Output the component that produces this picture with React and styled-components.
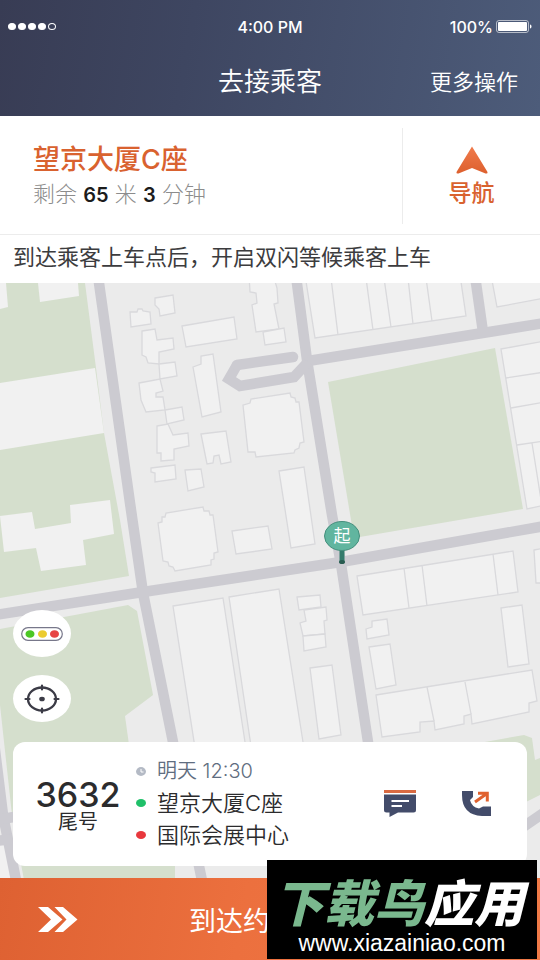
import React from "react";
import styled, { createGlobalStyle } from "styled-components";

const GlobalStyle = createGlobalStyle`
  * {
    box-sizing: border-box;
  }

  body {
    margin: 0;
    font-family: Inter, "Noto Sans CJK SC", sans-serif;
    color: #2b2b2d;
  }

  svg {
    display: block;
  }
`;

const Page = styled.div`
  display: flex;
  flex-direction: column;
  min-height: 100vh;
`;

const BareButton = styled.button`
  border: none;
  padding: 0;
  background: none;
  font-family: inherit;
  color: inherit;
  cursor: pointer;
`;

const Header = styled.header`
  background: linear-gradient(100deg, #383c54 0%, #3e4661 35%, #4d5c7a 100%);
  color: #fff;
  padding-bottom: 5px;
`;

const ThreeColumns = styled.div`
  display: grid;
  grid-template-columns: 1fr auto 1fr;
  align-items: center;
`;

const StatusBar = styled(ThreeColumns)`
  height: 53px;
  padding: 0 8px;
  font-size: 16px;
  font-weight: 500;
`;

const Signal = styled.div`
  display: flex;
  gap: 2px;
`;

const SignalDot = styled.span`
  width: 8px;
  height: 7px;
  border-radius: 50%;
  border: 1px solid #fff;
  background: ${(props) => (props.$on ? "#fff" : "transparent")};
`;

const Battery = styled.div`
  display: flex;
  align-items: center;
  justify-content: flex-end;
  gap: 3px;
`;

const NavBar = styled(ThreeColumns)`
  height: 58px;
  padding: 0 22px;
`;

const Title = styled.h1`
  grid-column: 2;
  margin: 0;
  font-size: 26px;
  font-weight: 350;
  line-height: 32px;
`;

const MoreButton = styled(BareButton)`
  justify-self: end;
  font-size: 22px;
  font-weight: 350;
  line-height: 32px;
`;

const Trip = styled.section`
  display: flex;
  padding: 12px 0 10px;
  background: #fff;
  border-bottom: 1px solid #ececec;
`;

const TripInfo = styled.div`
  flex: 1;
  padding: 14px 0 0 33px;
`;

const Place = styled.h2`
  margin: 0;
  font-size: 27px;
  font-weight: 500;
  line-height: 36px;
  color: #d9622f;
`;

const Remaining = styled.p`
  margin: 0;
  font-size: 22px;
  font-weight: 300;
  line-height: 32px;
  color: #8c8c8c;

  strong {
    font-size: 20px;
    font-weight: 600;
    color: #1c1c1c;
  }
`;

const NavigateButton = styled(BareButton)`
  display: flex;
  flex-direction: column;
  align-items: center;
  gap: 2px;
  width: 138px;
  height: 96px;
  padding-top: 18px;
  border-left: 1px solid #ececec;
  font-size: 23px;
  font-weight: 500;
  line-height: 34px;
  color: #d9622f;
`;

const Tip = styled.p`
  margin: 0;
  padding: 6px 13px 10px;
  background: #fff;
  font-size: 22px;
  line-height: 32px;
  white-space: nowrap;
  color: #3c3c3e;
`;

const MapArea = styled.main`
  position: relative;
  display: flex;
  flex: 1;
  flex-direction: column;
  justify-content: flex-end;
  gap: 18px;
  min-height: 420px;
  padding: 0 13px 12px;
  background: #ebebeb;
`;

const MapCanvas = styled.svg`
  position: absolute;
  inset: 0;
  width: 100%;
  height: 100%;
`;

const MapButton = styled(BareButton)`
  position: relative;
  display: flex;
  align-items: center;
  justify-content: center;
  width: 58px;
  height: 47px;
  border-radius: 50%;
  background: #fff;
`;

const OrderCard = styled.section`
  position: relative;
  display: flex;
  align-items: center;
  margin-top: 2px;
  padding: 13px 36px 15px 7px;
  border-radius: 12px;
  background: #fff;
`;

const Tail = styled.div`
  width: 116px;
  padding-top: 10px;
  text-align: center;
`;

const TailNumber = styled.div`
  font-size: 34px;
  font-weight: 500;
  line-height: 28px;
`;

const TailLabel = styled.div`
  font-size: 20px;
  line-height: 26px;
`;

const Stops = styled.ul`
  flex: 1;
  margin: 0;
  padding: 0;
  list-style: none;
`;

const Stop = styled.li`
  display: flex;
  align-items: center;
  gap: 11px;
  font-size: 22px;
  font-weight: 350;
  line-height: 32px;
  color: ${(props) => (props.$muted ? "#5f6d80" : "#2b2b2d")};
`;

const StopTime = styled.time`
  font-size: 20px;
  white-space: nowrap;
`;

const StopDot = styled.span`
  width: 10px;
  height: 8px;
  border-radius: 50%;
  background: ${(props) => props.$color};
`;

const Contacts = styled.div`
  display: flex;
  align-items: center;
  gap: 46px;
`;

const ArriveButton = styled(BareButton)`
  display: grid;
  grid-template-columns: 1fr auto 1fr;
  align-items: center;
  width: 100%;
  height: 82px;
  padding: 0 38px;
  background: linear-gradient(100deg, #de6132, #ec703e 45%, #f07a48);
  font-size: 27px;
  color: #fff;
`;

const Watermark = styled.a`
  position: absolute;
  right: 3px;
  bottom: 1px;
  width: 270px;
  height: 99px;
  padding-top: 10px;
  background: #000;
  color: #fff;
  text-align: center;
  text-decoration: none;
  white-space: nowrap;
`;

const WatermarkName = styled.div`
  padding-right: 6px;
  font-family: "Noto Sans CJK SC", sans-serif;
  font-size: 50px;
  font-style: italic;
  font-weight: 900;
  line-height: 60px;

  span {
    color: #7ab88e;
  }
`;

const WatermarkUrl = styled.div`
  font-family: "Liberation Sans", sans-serif;
  font-size: 23px;
  line-height: 26px;
`;

const Root = styled.div`
  position: relative;
`;

const parks = [
  "0,283 85,283 96,368 104,433 120,520 129,576 0,598",
  "328,382 495,348 523,509 354,538",
  "0,629 128,605 137,611 153,695 125,716 130,752 175,860 175,880 24,880 12,815 0,705",
  "440,750 524,735 532,738 535,760 540,758 540,795 500,815",
];

const roads = [
  "98,276 131,510 143,593 173,742 204,890",
  "-5,615 143,592 341,562 545,526",
  "296,276 307,360 332,515 341,564 368,742 388,890",
  "308,361 545,323",
  "475,276 483,332",
  "237,365 229,379 240,386 294,377 308,362",
  "-6,742 3,815 17,885",
  "-5,820 14,817",
  "-5,841 12,839",
  "510,836 545,812",
];

// lawns' own buildings, drawn without an outline
const plainBuildings = [
  "0,283 6,283 8,307 0,309",
  "38,283 78,283 79,296 40,302",
  "0,383 95,368 104,433 0,450",
  "0,516 32,512 35,529 71,523 70,505 110,500 114,534 83,540 86,565 41,571 36,548 4,552",
  "-5,846 8,844 13,880 -5,880",
];

const buildings = [
  "155,298 173,295 175,313 160,316 159,309 155,305",
  "130,312 137,312 138,309 142,309 143,311 150,312 151,324 131,327",
  "142,331 155,329 157,340 173,338 174,349 159,352 159,364 148,363 146,357 142,355 142,343",
  "159,364 175,362 177,376 160,379",
  "139,383 160,379 163,391 156,393 156,397 163,397 165,410 146,412 141,400",
  "165,410 182,407 184,420 167,424",
  "157,426 168,424 173,435 188,433 189,446 174,449 174,460 161,461 161,453 157,453",
  "151,468 175,465 176,479 155,482 155,473 151,472",
  "182,326 234,317 237,339 186,347",
  "193,367 201,364 201,356 213,354 221,412 202,417",
  "201,434 226,431 231,462 221,464 219,455 214,456 213,463 207,464",
  "185,470 201,469 204,487 188,491",
  "249,275 250,292 256,293 257,303 252,305 256,332 279,329 274,304 278,303 277,288 273,275",
  "263,332 284,328 286,342 265,345",
  "243,405 250,403 251,399 290,393 291,397 295,398 296,402 299,402 304,442 300,443 299,448 295,450 294,453 256,457 255,452 248,452",
  "279,471 304,467 315,544 291,548",
  "158,523 162,522 162,517 165,517 166,513 203,507 204,511 209,511 210,515 213,515 218,552 214,553 214,559 211,560 211,565 175,571 173,567 169,566 168,562 163,561",
  "232,531 268,526 272,549 236,554",
  "173,606 223,598 245,742 250,775 200,780",
  "229,597 279,589 303,742 308,775 256,780",
  "305,275 315,338 466,316 460,275",
  "491,275 497,307 545,298 545,275",
  "501,349 545,341 545,505 527,509",
  "297,597 320,595 321,607 299,610",
  "304,610 326,607 327,620 324,621 325,634 303,636 300,623 306,621",
  "303,636 325,634 326,647 304,651",
  "310,668 332,665 341,735 319,739",
  "357,576 513,551 518,592 363,615",
  "366,629 372,627 372,621 387,619 389,635 367,639",
  "369,647 390,644 396,685 376,689",
  "376,695 532,670 537,701 529,703 529,712 472,724 471,714 464,716 464,724 435,730 434,721 420,722 420,732 382,737",
  "501,608 522,605 529,664 508,667",
  "534,550 545,548 545,583 536,583",
];

const walls =
  "M331 278 338 335M366 278 373 330M384 278 391 327M408 278 413 324M426 278 432 321" +
  "M506 378 545 372M511 408 545 402M517 445 545 441M532 443 542 506" +
  "M404 568 409 608M422 565 427 606M493 554 498 595M427 687 434 721M465 682 471 714";

const CityMap = () => (
  <MapCanvas viewBox="0 283 540 595" preserveAspectRatio="xMidYMin slice" aria-label="地图">
    <rect x="0" y="283" width="540" height="595" fill="#ebebeb" />
    {parks.map((points) => (
      <polygon key={points} points={points} fill="#d5dfcd" />
    ))}
    {plainBuildings.map((points) => (
      <polygon key={points} points={points} fill="#f1f1f1" />
    ))}
    <g fill="#f1f1f1" stroke="#d9d9dc" strokeWidth="1.3">
      {buildings.map((points) => (
        <polygon key={points} points={points} />
      ))}
      <path d={walls} fill="none" />
    </g>
    <g fill="none" stroke="#cccbd1" strokeWidth="10.5">
      {roads.map((points) => (
        <polyline key={points} points={points} />
      ))}
      <path d="M237 365 293 357" strokeLinecap="round" />
    </g>
    <path d="M339.5 548V561a2.5 2.5 0 0 0 5 0V548Z" fill="#347c6c" />
    <ellipse cx="342" cy="562" rx="3" ry="2" fill="#285b50" />
    <ellipse cx="342" cy="536" rx="17.5" ry="14.5" fill="#61b59f" stroke="#458f7d" />
    <text x="342" y="542" textAnchor="middle" fontSize="17" fill="#fff">
      起
    </text>
  </MapCanvas>
);

const BatteryIcon = () => (
  <svg width="36" height="13" viewBox="0 0 36 13">
    <rect x="0.5" y="0.5" width="32" height="12" rx="2.5" fill="none" stroke="#fff" strokeOpacity="0.6" />
    <rect x="2" y="2" width="29" height="9" rx="1" fill="#fff" />
    <path d="M34 4.5c2 .5 2 3.5 0 4Z" fill="#fff" />
  </svg>
);

const ArrowIcon = () => (
  <svg width="32" height="28" viewBox="0 0 32 28">
    <defs>
      <linearGradient id="arrow" x1="0" y1="0" x2="0" y2="1">
        <stop offset="0" stopColor="#f07b4c" />
        <stop offset="1" stopColor="#dd602e" />
      </linearGradient>
    </defs>
    <path d="M16 0.5 31.5 26q.5 2-2 1.5L16 22 2.5 27.5q-2.5.5-2-1.5Z" fill="url(#arrow)" />
  </svg>
);

const TrafficIcon = () => (
  <svg width="42" height="14" viewBox="0 0 42 14">
    <rect x="0.7" y="0.7" width="40.6" height="12.6" rx="6.3" fill="#fff" stroke="#77778a" strokeWidth="1.2" />
    <ellipse cx="9" cy="7" rx="4.5" ry="3.8" fill="#4cc726" />
    <ellipse cx="21.5" cy="7" rx="4.5" ry="3.8" fill="#ebcb2f" />
    <ellipse cx="33.5" cy="7" rx="4.5" ry="3.8" fill="#e64444" />
  </svg>
);

const LocateIcon = () => (
  <svg width="36" height="30" viewBox="0 0 36 30" fill="none" stroke="#3b3b46">
    <ellipse cx="18" cy="15" rx="14" ry="11.5" strokeWidth="2.3" />
    <path d="M18 1.5v4M18 24.5v4M1.5 15h4M30.5 15h4" strokeWidth="2.2" strokeLinecap="round" />
    <ellipse cx="18" cy="15" rx="2.8" ry="2.3" fill="#3b3b46" stroke="none" />
  </svg>
);

const ClockIcon = () => (
  <svg width="10" height="9" viewBox="0 0 10 9">
    <ellipse cx="5" cy="4.5" rx="5" ry="4.4" fill="#b4bac5" />
    <path d="M5 2v3h2.5" fill="none" stroke="#fff" />
  </svg>
);

const MessageIcon = () => (
  <svg width="32" height="27" viewBox="0 0 32 27">
    <path d="M0 0h32v3H0Z" fill="#d96a42" />
    <path d="M0 4.5h32V20q0 2.500-2.500 2.500H14L5.500 27V22.500H2.500Q0 22.500 0 20Z" fill="#434c6a" />
    <path d="M7.5 11h17.500M7.500 16h10.500" stroke="#fff" strokeWidth="2" />
  </svg>
);

const PhoneIcon = () => (
  <svg width="29" height="26" viewBox="0 0 29 26">
    <path
      d="M0 1H11V7L8 10Q9.5 17 17 18.5L21 16.5H29V26H20Q0 25 0 5Z"
      fill="#434c6a"
    />
    <path d="M16 3.200H25.300V11.500M13 12 25 3.500" fill="none" stroke="#e0622f" strokeWidth="3" />
  </svg>
);

const ChevronsIcon = () => (
  <svg width="40" height="25" viewBox="0 0 40 25" fill="#fff">
    <path d="M0 0H10L24.5 12.5 10 25H0L13 12.5Z" />
    <path d="M16.5 0H25L39.5 12.5 25 25H16.5L28.5 12.5Z" />
  </svg>
);

const App = () => {
  return (
    <Root>
      <GlobalStyle />
      <Page>
        <Header>
          <StatusBar>
            <Signal>
              {[true, true, true, true, false].map((on, index) => (
                <SignalDot key={index} $on={on} />
              ))}
            </Signal>
            <span>4:00 PM</span>
            <Battery>
              100%
              <BatteryIcon />
            </Battery>
          </StatusBar>
          <NavBar>
            <Title>去接乘客</Title>
            <MoreButton>更多操作</MoreButton>
          </NavBar>
        </Header>
        <Trip>
          <TripInfo>
            <Place>望京大厦C座</Place>
            <Remaining>
              剩余 <strong>65</strong> 米 <strong>3</strong> 分钟
            </Remaining>
          </TripInfo>
          <NavigateButton>
            <ArrowIcon />
            导航
          </NavigateButton>
        </Trip>
        <Tip>到达乘客上车点后，开启双闪等候乘客上车</Tip>
        <MapArea>
          <CityMap />
          <MapButton aria-label="路况">
            <TrafficIcon />
          </MapButton>
          <MapButton aria-label="定位">
            <LocateIcon />
          </MapButton>
          <OrderCard>
            <Tail>
              <TailNumber>3632</TailNumber>
              <TailLabel>尾号</TailLabel>
            </Tail>
            <Stops>
              <Stop $muted>
                <ClockIcon />
                <StopTime>明天 12:30</StopTime>
              </Stop>
              <Stop>
                <StopDot $color="#1fc069" />
                望京大厦C座
              </Stop>
              <Stop>
                <StopDot $color="#e8383d" />
                国际会展中心
              </Stop>
            </Stops>
            <Contacts>
              <BareButton aria-label="发消息">
                <MessageIcon />
              </BareButton>
              <BareButton aria-label="打电话">
                <PhoneIcon />
              </BareButton>
            </Contacts>
          </OrderCard>
        </MapArea>
        <ArriveButton>
          <ChevronsIcon />
          到达约定地点
        </ArriveButton>
      </Page>
      <Watermark href="http://www.xiazainiao.com">
        <WatermarkName>
          <span>下载鸟</span>应用
        </WatermarkName>
        <WatermarkUrl>www.xiazainiao.com</WatermarkUrl>
      </Watermark>
    </Root>
  );
};

export default App;
